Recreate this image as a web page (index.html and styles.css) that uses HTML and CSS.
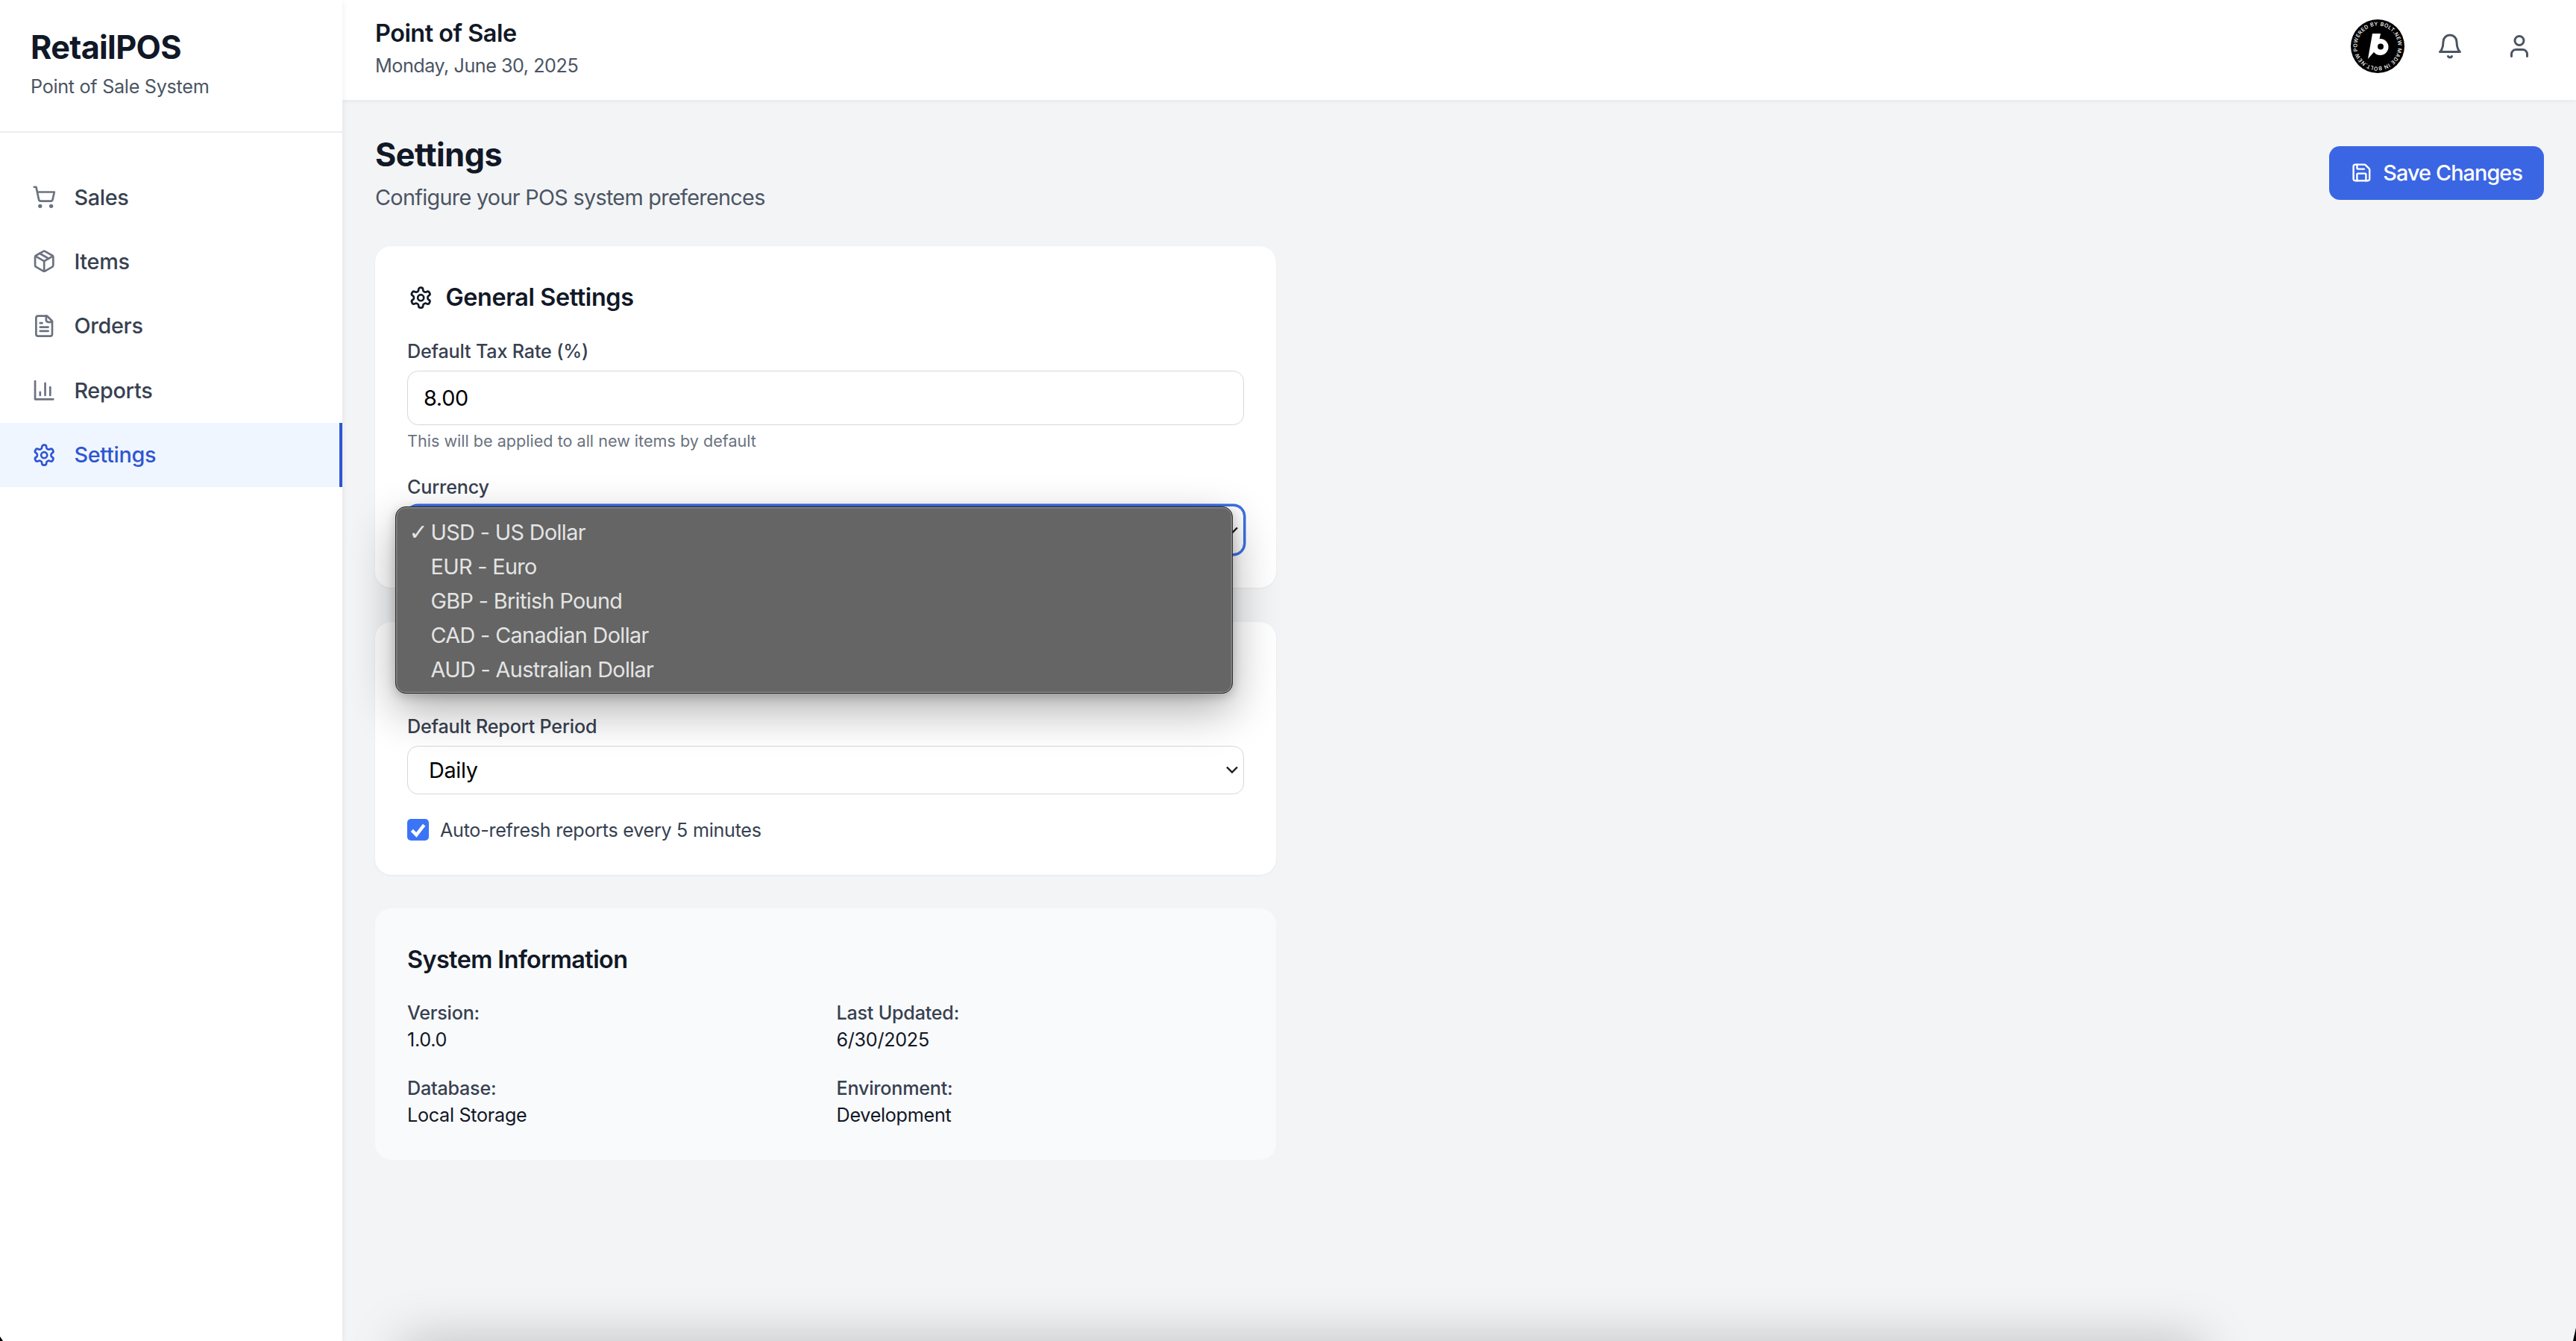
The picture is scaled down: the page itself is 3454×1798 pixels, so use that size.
FILE: index.html
```html
<!DOCTYPE html>
<html lang="en">
<head>
<meta charset="utf-8">
<title>RetailPOS</title>
<link rel="stylesheet" href="styles.css">
</head>
<body>
<svg class="sprite" xmlns="http://www.w3.org/2000/svg">
  <symbol id="i-cart" viewBox="0 0 24 24"><circle cx="8" cy="21" r="1"/><circle cx="19" cy="21" r="1"/><path d="M2.05 2.05h2l2.66 12.42a2 2 0 0 0 2 1.58h9.78a2 2 0 0 0 1.95-1.57l1.65-7.43H5.12"/></symbol>
  <symbol id="i-package" viewBox="0 0 24 24"><path d="m7.5 4.27 9 5.15"/><path d="M21 8a2 2 0 0 0-1-1.73l-7-4a2 2 0 0 0-2 0l-7 4A2 2 0 0 0 3 8v8a2 2 0 0 0 1 1.73l7 4a2 2 0 0 0 2 0l7-4A2 2 0 0 0 21 16Z"/><path d="m3.3 7 8.7 5 8.7-5"/><path d="M12 22V12"/></symbol>
  <symbol id="i-file" viewBox="0 0 24 24"><path d="M15 2H6a2 2 0 0 0-2 2v16a2 2 0 0 0 2 2h12a2 2 0 0 0 2-2V7Z"/><path d="M14 2v4a2 2 0 0 0 2 2h4"/><path d="M10 9H8"/><path d="M16 13H8"/><path d="M16 17H8"/></symbol>
  <symbol id="i-chart" viewBox="0 0 24 24"><path d="M3 3v18h18"/><path d="M18 17V9"/><path d="M13 17V5"/><path d="M8 17v-3"/></symbol>
  <symbol id="i-gear" viewBox="0 0 24 24"><path d="M12.22 2h-.44a2 2 0 0 0-2 2v.18a2 2 0 0 1-1 1.73l-.43.25a2 2 0 0 1-2 0l-.15-.08a2 2 0 0 0-2.73.73l-.22.38a2 2 0 0 0 .73 2.73l.15.1a2 2 0 0 1 1 1.72v.51a2 2 0 0 1-1 1.74l-.15.09a2 2 0 0 0-.73 2.73l.22.38a2 2 0 0 0 2.73.73l.15-.08a2 2 0 0 1 2 0l.43.25a2 2 0 0 1 1 1.73V20a2 2 0 0 0 2 2h.44a2 2 0 0 0 2-2v-.18a2 2 0 0 1 1-1.73l.43-.25a2 2 0 0 1 2 0l.15.08a2 2 0 0 0 2.73-.73l.22-.39a2 2 0 0 0-.73-2.73l-.15-.08a2 2 0 0 1-1-1.74v-.5a2 2 0 0 1 1-1.74l.15-.09a2 2 0 0 0 .73-2.73l-.22-.38a2 2 0 0 0-2.73-.73l-.15.08a2 2 0 0 1-2 0l-.43-.25a2 2 0 0 1-1-1.73V4a2 2 0 0 0-2-2z"/><circle cx="12" cy="12" r="3"/></symbol>
  <symbol id="i-bell" viewBox="0 0 24 24"><path d="M6 8a6 6 0 0 1 12 0c0 7 3 9 3 9H3s3-2 3-9"/><path d="M10.3 21a1.94 1.94 0 0 0 3.4 0"/></symbol>
  <symbol id="i-user" viewBox="0 0 24 24"><path d="M19 21v-2a4 4 0 0 0-4-4H9a4 4 0 0 0-4 4v2"/><circle cx="12" cy="7" r="4"/></symbol>
  <symbol id="i-save" viewBox="0 0 24 24"><path d="M15.2 3a2 2 0 0 1 1.4.6l3.8 3.8a2 2 0 0 1 .6 1.4V19a2 2 0 0 1-2 2H5a2 2 0 0 1-2-2V5a2 2 0 0 1 2-2z"/><path d="M17 21v-7a1 1 0 0 0-1-1H8a1 1 0 0 0-1 1v7"/><path d="M7 3v4a1 1 0 0 0 1 1h7"/></symbol>
  <symbol id="i-chev" viewBox="0 0 16 10"><path d="M1 1.5 8 8.5 15 1.5"/></symbol>
</svg>

<div class="app">
  <aside class="sidebar">
    <div class="brand">
      <div class="brand-name">RetailPOS</div>
      <div class="brand-sub">Point of Sale System</div>
    </div>
    <nav class="nav">
      <a class="nav-item"><svg class="icon nav-icon"><use href="#i-cart"/></svg><span>Sales</span></a>
      <a class="nav-item"><svg class="icon nav-icon"><use href="#i-package"/></svg><span>Items</span></a>
      <a class="nav-item"><svg class="icon nav-icon"><use href="#i-file"/></svg><span>Orders</span></a>
      <a class="nav-item"><svg class="icon nav-icon"><use href="#i-chart"/></svg><span>Reports</span></a>
      <a class="nav-item active"><svg class="icon nav-icon"><use href="#i-gear"/></svg><span>Settings</span></a>
    </nav>
  </aside>

  <div class="content">
    <header class="topbar">
      <div class="topbar-titles">
        <div class="topbar-title">Point of Sale</div>
        <div class="topbar-date">Monday, June 30, 2025</div>
      </div>
      <div class="topbar-actions">
        <svg class="badge" viewBox="0 0 72 72" xmlns="http://www.w3.org/2000/svg">
          <defs><path id="badge-ring" d="M8.5 36a27.5 27.5 0 1 1 55 0a27.5 27.5 0 1 1-55 0"/></defs>
          <circle cx="36" cy="36" r="36" fill="#000"/>
          <g transform="rotate(-14 36 36)">
            <text class="badge-text"><textPath href="#badge-ring" textLength="170">POWERED BY BOLT.NEW MADE IN BOLT.NEW</textPath></text>
          </g>
          <polygon points="29,19 40,19 36,38 23,53" fill="#fff"/>
          <circle cx="39.5" cy="37" r="11" fill="#fff"/>
          <circle cx="40" cy="36.5" r="4" fill="#000"/>
        </svg>
        <svg class="icon top-icon bell"><use href="#i-bell"/></svg>
        <svg class="icon top-icon user"><use href="#i-user"/></svg>
      </div>
    </header>

    <main class="main">
      <div class="page-head">
        <div>
          <h1 class="page-title">Settings</h1>
          <p class="page-sub">Configure your POS system preferences</p>
        </div>
        <button class="save-btn"><svg class="icon save-icon"><use href="#i-save"/></svg>Save Changes</button>
      </div>

      <div class="stack">
        <section class="card card-general">
          <h2 class="card-title"><svg class="icon head-icon"><use href="#i-gear"/></svg>General Settings</h2>
          <label class="field-label">Default Tax Rate (%)</label>
          <input class="text-input" type="text" value="8.00">
          <p class="help">This will be applied to all new items by default</p>
          <label class="field-label currency-label">Currency</label>
          <div class="select select-focus">
            <span></span>
            <svg class="chev"><use href="#i-chev"/></svg>
            <div class="popup">
              <div class="popup-item"><span class="popup-check">✓</span>USD - US Dollar</div>
              <div class="popup-item"><span class="popup-check"></span>EUR - Euro</div>
              <div class="popup-item"><span class="popup-check"></span>GBP - British Pound</div>
              <div class="popup-item"><span class="popup-check"></span>CAD - Canadian Dollar</div>
              <div class="popup-item"><span class="popup-check"></span>AUD - Australian Dollar</div>
            </div>
          </div>
        </section>

        <section class="card card-report">
          <div class="card-title-space"></div>
          <label class="field-label">Default Report Period</label>
          <div class="select">
            <span class="select-value">Daily</span>
            <svg class="chev"><use href="#i-chev"/></svg>
          </div>
          <div class="check-row">
            <span class="checkbox"><svg viewBox="0 0 16 16"><path d="M3.5 8.5 6.8 11.8 12.5 4.5"/></svg></span>
            <span>Auto-refresh reports every 5 minutes</span>
          </div>
        </section>

        <section class="card card-info">
          <h2 class="card-title tight">System Information</h2>
          <div class="info-grid">
            <div><div class="info-key">Version:</div><div class="info-val">1.0.0</div></div>
            <div><div class="info-key">Last Updated:</div><div class="info-val">6/30/2025</div></div>
            <div><div class="info-key">Database:</div><div class="info-val">Local Storage</div></div>
            <div><div class="info-key">Environment:</div><div class="info-val">Development</div></div>
          </div>
        </section>
      </div>
    </main>
  </div>
</div>
<div class="under-shadow"></div>
<div class="corner corner-left"></div>
<div class="corner corner-right"></div>
</body>
</html>
```
FILE: styles.css
```css
* { box-sizing: border-box; }
html, body { margin: 0; padding: 0; height: 100%; overflow: hidden; }
body {
  font-family: Inter, "Liberation Sans", sans-serif;
  color: #111827;
  background: #f3f4f6;
  position: relative;
}
.sprite { display: none; }
.icon { fill: none; stroke: currentColor; stroke-linecap: round; stroke-linejoin: round; flex: none; }

.app { display: flex; height: 1798px; }

.sidebar {
  width: 459px; flex: none; background: #fff;
  box-shadow: 0 2px 8px rgba(0,0,0,.08);
  position: relative; z-index: 2;
}
.brand { height: 178px; padding: 36px 41px 0; border-bottom: 2px solid #eceef1; }
.brand-name { font-size: 43.2px; line-height: 54px; font-weight: 700; letter-spacing: -.65px; color: #111827; }
.brand-sub { font-size: 25.2px; line-height: 36px; margin-top: 8px; letter-spacing: -.3px; color: #4b5563; }
.nav { padding-top: 43px; }
.nav-item {
  display: flex; align-items: center; height: 86.4px; padding-left: 43px; gap: 24px;
  font-size: 28.8px; font-weight: 500; letter-spacing: -.3px; color: #374151;
}
.nav-icon { width: 32.4px; height: 32.4px; color: #6b7280; stroke-width: 2; }
.nav-item.active { background: #eff6ff; color: #2f55d4; border-right: 4px solid #2f55d4; }
.nav-item.active .nav-icon { color: #2f55d4; }

.content { flex: 1; min-width: 0; display: flex; flex-direction: column; }
.topbar {
  height: 134px; flex: none; background: #fff; display: flex; justify-content: space-between;
  padding: 0 58px 0 44px; box-shadow: 0 2px 4px rgba(0,0,0,.05); position: relative; z-index: 1;
}
.topbar-titles { padding-top: 22px; }
.topbar-title { font-size: 32.4px; line-height: 46px; font-weight: 600; letter-spacing: -.5px; color: #111827; }
.topbar-date { font-size: 25.2px; line-height: 36px; margin-top: 2px; letter-spacing: -.48px; color: #4b5563; }
.topbar-actions { display: flex; align-items: flex-start; padding-top: 26px; }
.badge { width: 72px; height: 72px; flex: none; }
.badge-text { font-family: Inter, "Liberation Sans", sans-serif; font-size: 7px; font-weight: 500; fill: #fff; }
.top-icon { width: 36px; height: 36px; color: #4b5563; stroke-width: 2; margin-top: 18px; }
.bell { margin-left: 43px; }
.user { margin-left: 57px; }

.main { flex: 1; padding: 43px 43px 43px 44px; }
.page-head { display: flex; justify-content: space-between; align-items: center; margin-bottom: 44px; }
.page-title { margin: 0; font-size: 43.2px; line-height: 61px; font-weight: 700; letter-spacing: -.5px; color: #111827; }
.page-sub { margin: 5px 0 0; font-size: 28.8px; line-height: 43px; letter-spacing: -.7px; color: #4b5563; }
.save-btn {
  display: flex; align-items: center; gap: 14.4px; height: 72px; padding: 0 29px;
  border: 0; border-radius: 14.4px; background: #3b66e3; color: #fff;
  font-family: inherit; font-size: 28.8px; font-weight: 500; letter-spacing: -.9px;
}
.save-icon { width: 28.8px; height: 28.8px; stroke-width: 2; }

.stack { width: 1208px; display: flex; flex-direction: column; gap: 45.5px; }
.card { background: #fff; border-radius: 21.6px; padding: 43px; box-shadow: 0 1px 3px rgba(0,0,0,.05); position: relative; }
.card-general { height: 458px; z-index: 3; }
.card-report { height: 339px; }
.card-info { height: 337px; background: #f9fafb; box-shadow: none; }
.card-title { display: flex; align-items: center; gap: 17px; margin: 0 0 28px; font-size: 32.4px; line-height: 52px; font-weight: 600; letter-spacing: -.4px; color: #111827; }
.card-title.tight { letter-spacing: -.6px; margin-bottom: 27px; }
.card-title-space { height: 51px; margin-bottom: 28px; }
.head-icon { width: 32.4px; height: 32.4px; color: #111827; stroke-width: 2; margin-left: 2px; }

.field-label { display: block; font-size: 25.2px; line-height: 36px; font-weight: 500; letter-spacing: -.2px; color: #374151; margin-bottom: 8px; }
.text-input {
  display: block; width: 100%; height: 73px; padding: 0 21px;
  border: 1.5px solid #d5d7db; border-radius: 14.4px; background: #fff; outline: 0;
  font-family: inherit; font-size: 28.8px; letter-spacing: -.3px; color: #000;
}
.help { margin: 7px 0 0; font-size: 21.6px; line-height: 29px; color: #6b7280; }
.currency-label { margin-top: 29px; margin-bottom: 7px; }

.select {
  position: relative; display: flex; align-items: center; justify-content: space-between;
  height: 65px; padding: 0 7px 0 28px; border: 1.5px solid #d5d7db; border-radius: 14.4px;
  background: #fff; font-size: 28.8px; letter-spacing: -.3px; color: #000;
}
.select-focus { border-color: #3b6fe6; box-shadow: 0 0 0 2.5px #3b6fe6; }
.chev { width: 16px; height: 10px; fill: none; stroke: #1a1a1a; stroke-width: 2.4; flex: none; }

.popup {
  position: absolute; left: -17.5px; top: -.5px; width: 1123px; height: 251px; z-index: 5;
  padding-top: 11px; border-radius: 14px; background: #646564;
  border: 1.5px solid #2b2b2b;
  box-shadow: inset 0 0 0 1.5px #858685, 0 22px 60px rgba(0,0,0,.32), 0 4px 14px rgba(0,0,0,.2);
  color: #e4e4e4; font-size: 28.8px; letter-spacing: -.65px;
}
.popup-item { display: flex; align-items: center; height: 46px; line-height: 46px; padding-left: 18px; white-space: nowrap; }
.popup-check { width: 29px; flex: none; font-family: "DejaVu Sans", sans-serif; font-size: 30px; letter-spacing: 0; }

.check-row { display: flex; align-items: center; gap: 15px; margin-top: 30px; font-size: 25.2px; line-height: 36px; letter-spacing: -.3px; color: #374151; }
.checkbox { width: 29px; height: 29px; flex: none; border-radius: 5px; background: #3b74f6; display: flex; }
.checkbox svg { width: 29px; height: 29px; fill: none; stroke: #fff; stroke-width: 2.4; }

.info-grid { display: grid; grid-template-columns: 1fr 1fr; column-gap: 29px; row-gap: 29px; }
.info-key { font-size: 25.2px; line-height: 36px; font-weight: 500; letter-spacing: -.25px; color: #374151; }
.info-val { font-size: 25.2px; line-height: 36px; letter-spacing: -.3px; color: #111827; }

.under-shadow {
  position: absolute; left: 540px; top: 1800px; width: 2410px; height: 60px;
  box-shadow: 0 0 70px rgba(0,0,0,.25);
}
.corner { position: absolute; bottom: 0; background: #000; z-index: 9; }
.corner-left { left: 0; width: 4px; height: 6px; clip-path: polygon(0 0, 100% 100%, 0 100%); }
.corner-right { right: 0; width: 4px; height: 18px; clip-path: polygon(100% 0, 100% 100%, 0 100%); }
```
